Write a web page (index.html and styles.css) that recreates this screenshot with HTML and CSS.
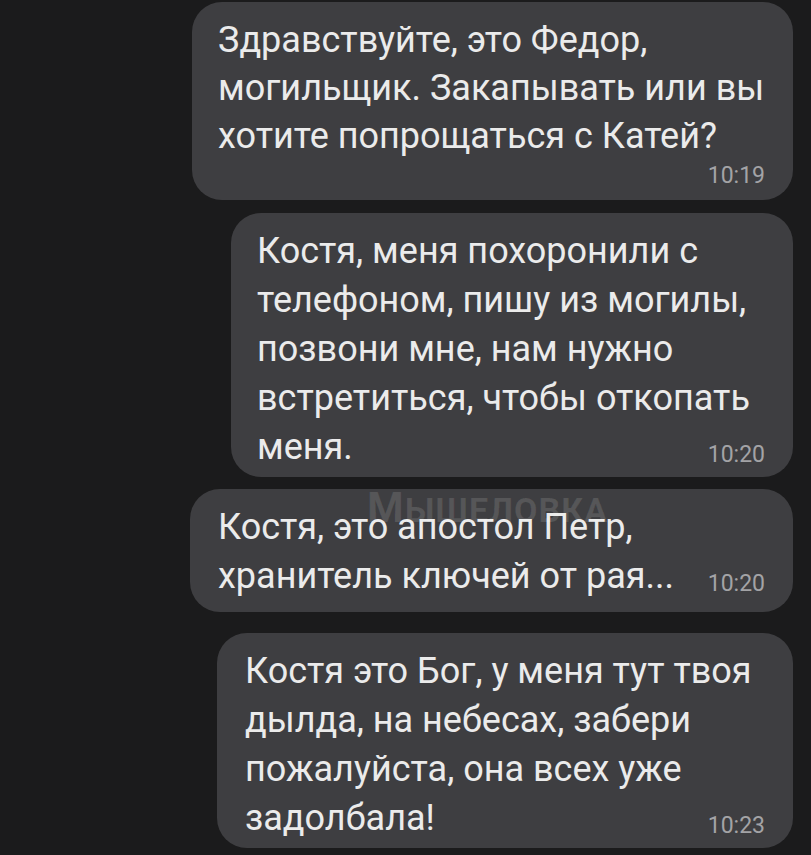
FILE: index.html
```html
<!DOCTYPE html>
<html lang="ru">
<head>
<meta charset="utf-8">
<title>Chat</title>
<link rel="stylesheet" href="styles.css">
</head>
<body>
<div class="chat">
  <div class="bubble b1">
    <div class="msg">Здравствуйте, это Федор,<br>могильщик. Закапывать или вы<br>хотите попрощаться с Катей?</div>
    <div class="time time-block">10:19</div>
  </div>
  <div class="bubble b2">
    <div class="msg">Костя, меня похоронили с<br>телефоном, пишу из могилы,<br>позвони мне, нам нужно<br>встретиться, чтобы откопать<br>меня.<span class="time time-float">10:20</span></div>
  </div>
  <div class="bubble b3">
    <div class="msg">Костя, это апостол Петр,<br>хранитель ключей от рая...<span class="time time-float">10:20</span></div>
  </div>
  <div class="bubble b4">
    <div class="msg">Костя это Бог, у меня тут твоя<br>дылда, на небесах, забери<br>пожалуйста, она всех уже<br>задолбала!<span class="time time-float">10:23</span></div>
  </div>
</div>
<div class="watermark"><span class="wm-big">М</span>ЫШЕЛОВКА</div>
</body>
</html>
```

FILE: styles.css
```css
html, body {
  margin: 0;
  padding: 0;
  background: #1b1b1c;
}
body {
  width: 811px;
  height: 855px;
  overflow: hidden;
  position: relative;
  font-family: Roboto, "Liberation Sans", sans-serif;
}
.chat {
  display: flex;
  flex-direction: column;
  align-items: flex-end;
  padding: 2px 18px 0 0;
}
.bubble {
  background: #3e3e41;
  border-radius: 30px;
  box-sizing: border-box;
  padding: 14px 28px 5px 26px;
  color: #ebebeb;
  display: flow-root;
}
.msg {
  font-size: 36px;
  line-height: 49px;
  white-space: nowrap;
}
.b1 { width: 601px; padding-bottom: 13px; }
.b1 .msg { line-height: 48px; }
.b2 { width: 562px; margin-top: 13px; }
.b3 { width: 603px; margin-top: 12px; padding-bottom: 11px; padding-left: 28px; }
.b4 { width: 576px; margin-top: 21px; padding-left: 28px; }
.time {
  font-size: 23px;
  line-height: 23px;
  color: #a3a3a6;
}
.time-block {
  text-align: right;
  margin-top: 4px;
}
.time-float {
  float: right;
  margin-top: 20px;
}
.watermark {
  position: absolute;
  left: 367px;
  top: 487px;
  font-family: Roboto, "Liberation Sans", sans-serif;
  font-weight: 700;
  font-size: 34px;
  letter-spacing: 1px;
  color: rgba(255, 255, 255, 0.12);
  line-height: 1;
  pointer-events: none;
}
.wm-big {
  font-size: 42px;
}
```
